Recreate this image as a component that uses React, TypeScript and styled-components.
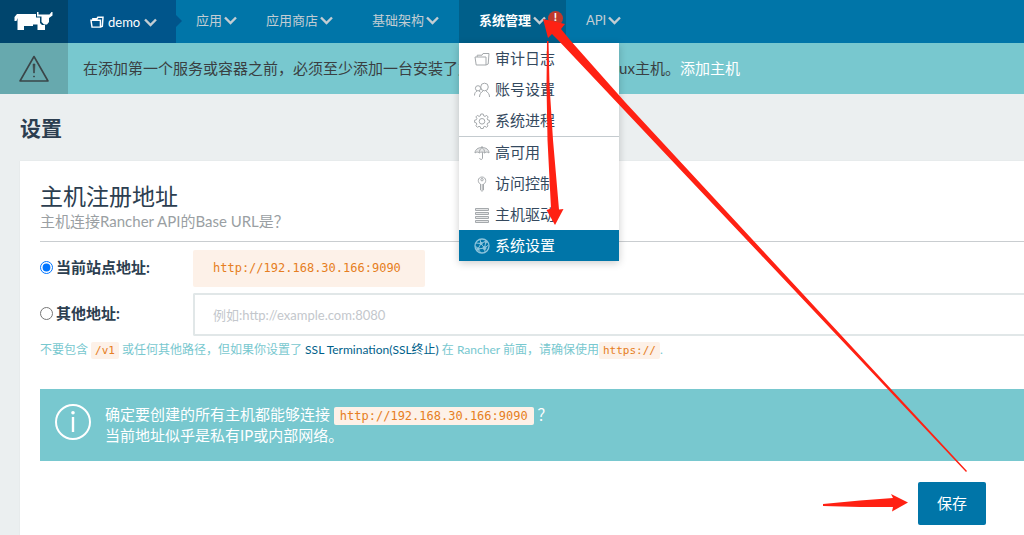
import React from "react";
import styled, { createGlobalStyle } from "styled-components";

const GlobalStyle = createGlobalStyle`
  * { box-sizing: border-box; }
  body {
    margin: 0;
    background: #ebeff0;
    color: #2c3e50;
    font: 15px/21px Lato, "Noto Sans CJK SC", sans-serif;
    overflow-x: hidden;
  }
  a { text-decoration: none; }
  button, input { font: inherit; }
`;

const Page = styled.div`
  position: relative;
`;

const Header = styled.header`
  display: flex;
  height: 43px;
  background: #0075a8;
`;

const Logo = styled.a`
  width: 68px;
  padding: 9px 0 0 13px;
  background: #00456d;
`;

const Environment = styled.button`
  position: relative;
  display: flex;
  align-items: center;
  gap: 4px;
  width: 108px;
  padding: 1px 0 0 22px;
  border: 0;
  background: #00558b;
  color: #fff;
  font-size: 13px;
  svg:last-child { color: #c3cdd3; }
  &::after {
    content: "";
    position: absolute;
    left: 100%;
    top: 15px;
    border: 6px solid transparent;
    border-right: 0;
    border-left-color: #00558b;
  }
`;

const Nav = styled.nav`
  display: flex;
`;

const NavItem = styled.div<{ $width: number; $active?: boolean }>`
  position: relative;
  display: flex;
  width: ${(p) => p.$width}px;
  background: ${(p) => (p.$active ? "#005f8a" : "transparent")};
`;

const NavButton = styled.button<{ $active?: boolean }>`
  display: flex;
  align-items: center;
  gap: 2px;
  width: 100%;
  padding: 0 0 2px 20px;
  border: 0;
  background: none;
  white-space: nowrap;
  font-size: 13px;
  font-weight: ${(p) => (p.$active ? 700 : 400)};
  color: ${(p) => (p.$active ? "#fff" : "#c3cdd3")};
  svg { color: #c3cdd3; }
`;

const AlertBadge = styled.span`
  position: absolute;
  top: 11px;
  left: 89px;
  width: 15px;
  height: 15px;
  border-radius: 50%;
  background: #c0392b;
  color: #fff;
  font-size: 12px;
  font-weight: 700;
  line-height: 12px;
  text-align: center;
`;

const Menu = styled.ul`
  position: absolute;
  z-index: 2;
  top: 43px;
  left: 0;
  width: 160px;
  margin: 0;
  padding: 0;
  list-style: none;
  background: #fff;
  box-shadow: 0 2px 8px rgba(0, 0, 0, 0.2);
`;

const MenuItem = styled.li<{ $divided?: boolean }>`
  border-top: ${(p) => (p.$divided ? "1px solid #c4cbcf" : "0")};
`;

const MenuLink = styled.a<{ $active?: boolean }>`
  display: flex;
  align-items: center;
  gap: 5px;
  height: 31px;
  padding-left: 15px;
  color: ${(p) => (p.$active ? "#fff" : "#34495e")};
  background: ${(p) => (p.$active ? "#0075a8" : "transparent")};
  svg { color: ${(p) => (p.$active ? "#8dc4dc" : "#a5a9ac")}; }
`;

const Banner = styled.div`
  display: flex;
  height: 51px;
  background: #78c8cf;
  color: #3a3f42;
  white-space: nowrap;
`;

const BannerIcon = styled.div`
  display: flex;
  align-items: center;
  justify-content: center;
  width: 68px;
  background: #67a9ae;
`;

const BannerText = styled.p`
  margin: 0;
  padding: 15px;
  a { color: #fff; }
`;

const PageTitle = styled.h1`
  margin: 0;
  padding: 19px 20px 18px;
  font-size: 21px;
  line-height: 30px;
`;

const Card = styled.main`
  margin-left: 20px;
  padding: 20px 0 10px 20px;
  background: #fff;
  box-shadow: 0 0 1px rgba(0, 0, 0, 0.1);
`;

const SectionHeader = styled.header`
  padding-bottom: 9px;
  border-bottom: 1px solid #c9cdd0;
`;

const SectionTitle = styled.h2`
  margin: 0;
  font-size: 23px;
  font-weight: 400;
  line-height: 30px;
`;

const Subtitle = styled.p`
  margin: 0;
  color: #9a9fa3;
`;

const Fields = styled.div`
  display: grid;
  gap: 6px;
  padding-top: 8px;
`;

const Field = styled.div`
  display: grid;
  grid-template-columns: 153px 1fr;
  align-items: center;
`;

const Choice = styled.label`
  display: flex;
  align-items: center;
  gap: 3px;
  padding-bottom: 2px;
  font-weight: 700;
  input { width: 13px; height: 13px; margin: 0; }
`;

const Code = styled.code`
  padding: 2px 4px;
  border-radius: 2px;
  background: #fdf1e8;
  color: #e67e22;
  font: 11px/15px "DejaVu Sans Mono", monospace;
`;

const AddressCode = styled(Code)`
  padding: 2px 6px;
  font-size: 12px;
`;

const CurrentAddress = styled(Code)`
  justify-self: start;
  padding: 8px 24px 8px 20px;
  font-size: 12px;
  line-height: 21px;
`;

const UrlInput = styled.input`
  width: 100%;
  height: 43px;
  padding: 0 18px;
  border: 2px solid #e1e7e8;
  border-right: 0;
  border-radius: 2px 0 0 2px;
  background: #fff;
  font-size: 13px;
  &::placeholder { color: #c3c7cc; opacity: 1; }
`;

const Help = styled.p`
  margin: 0;
  padding-top: 3px;
  color: #78c8cf;
  font-size: 12px;
  a { color: #005f8a; }
`;

const Notice = styled.section`
  display: flex;
  gap: 14px;
  margin-top: 29px;
  padding: 15px;
  background: #78c8cf;
  color: #fff;
  p { margin: 0; }
`;

const Actions = styled.div`
  display: flex;
  justify-content: flex-end;
  padding: 21px 38px 0 0;
`;

const SaveButton = styled.button`
  width: 68px;
  height: 43px;
  border: 0;
  border-radius: 2px;
  background: #0075a8;
  color: #fff;
`;

const Annotations = styled.svg`
  position: absolute;
  z-index: 3;
  top: 0;
  left: 0;
  pointer-events: none;
`;

const Chevron = () => (
  <svg width="13" height="9" viewBox="0 0 13 9" fill="none" stroke="currentColor" strokeWidth="2.4">
    <path d="M1 1.5 6.5 7 12 1.5" />
  </svg>
);

const Folder = ({ bold }: { bold?: boolean }) => (
  <svg width={bold ? 14 : 16} height={bold ? 12 : 14} viewBox="0 0 16 14" fill="none" stroke="currentColor" strokeWidth={bold ? 1.7 : 1}>
    <path d="M1 5H12V13H2.2ZM3.2 5V3.2H8L9 1.5H15L14.2 12 12 13" />
  </svg>
);

const drawings: Record<string, React.ReactNode> = {
  users: (
    <>
      <circle cx="10.5" cy="5" r="3.8" />
      <path d="M5.5 15C5.5 12 7 10.5 9 9M12 9C14 10.5 15.5 12 15.5 15" />
      <circle cx="4" cy="6.3" r="2.6" />
      <path d="M.5 13.5C.5 11 1.5 9.8 3 9M5 9 6.6 10.2" />
    </>
  ),
  gear: (
    <>
      <path d="M6.8 1H9.2L9.7 2.9 11 3.4 12.7 2.4 14.2 4 13.2 5.6 13.7 6.9 15.4 7.3V9.5L13.7 10 13.1 11.2 14 12.9 12.5 14.3 10.9 13.3 9.7 13.8 9.2 15.5H6.8L6.3 13.8 5 13.3 3.4 14.3 1.9 12.8 2.8 11.1 2.3 9.9.6 9.4V7.2L2.3 6.8 2.9 5.5 1.9 3.9 3.4 2.4 5.1 3.4 6.3 2.9Z" />
      <circle cx="8" cy="8.3" r="2.8" />
    </>
  ),
  umbrella: (
    <>
      <path d="M1 8C1 4.7 4 2.5 8 2.5S15 4.7 15 8C13.5 6.7 12 6.7 10.8 8 9.5 6.7 6.5 6.7 5.2 8 4 6.7 2.5 6.7 1 8Z" fill="currentColor" fillOpacity=".25" />
      <path d="M8 1V2.5M5.2 8C5.3 5.5 6.5 3.5 8 2.5 9.5 3.5 10.7 5.5 10.8 8M8.5 7.2V13C8.5 15 5.7 15 5.7 13" />
    </>
  ),
  key: (
    <>
      <path d="M6.5 8C4.5 7.2 4.3 5.5 4.3 4.5 4.3 2.5 6 1 8 1S11.7 2.5 11.7 4.5C11.7 5.5 11.5 7.2 9.5 8V14L8 15.3 6.5 14Z" />
      <circle cx="8" cy="3.7" r="1.2" />
      <path d="M8.2 8V14" />
    </>
  ),
  hosts: (
    <path d="M1.5 1.5H14.5V3.5H1.5ZM1.5 5.5H14.5V7.5H1.5ZM1.5 9.5H14.5V11.5H1.5ZM1.5 13.5H14.5V15.5H1.5Z" fill="currentColor" fillOpacity=".3" />
  ),
  network: (
    <>
      <circle cx="8" cy="8" r="7" strokeWidth="1.3" />
      <path d="M2 5 7 5.5 12 3M7 5.5 10.5 10 14.5 7M7 5.5 4 11 10.5 10 11 14M4 11 1.5 8M4 11 7 15M7 5.5 6 1.5M10.5 10 12 3" />
      <circle cx="7" cy="5.5" r="1.2" fill="currentColor" />
      <circle cx="4" cy="11" r="1.2" fill="currentColor" />
      <circle cx="10.5" cy="10" r="1.5" fill="currentColor" />
      <circle cx="12" cy="4" r="1" fill="currentColor" />
    </>
  ),
};

const MenuIcon = ({ name }: { name: string }) =>
  name === "folder" ? (
    <Folder />
  ) : (
    <svg width="16" height="16" viewBox="0 0 16 16" fill="none" stroke="currentColor">
      {drawings[name]}
    </svg>
  );

const menu = [
  { icon: "folder", label: "审计日志" },
  { icon: "users", label: "账号设置" },
  { icon: "gear", label: "系统进程" },
  { icon: "umbrella", label: "高可用", divided: true },
  { icon: "key", label: "访问控制" },
  { icon: "hosts", label: "主机驱动" },
  { icon: "network", label: "系统设置", active: true },
];

export default function App() {
  return (
    <Page>
      <GlobalStyle />
      <Header>
        <Logo href="#" aria-label="Rancher">
          <svg width="42" height="24" viewBox="0 0 42 24" fill="#fff">
            <path d="M4 5H23V8.5H27V14L29 16H32V21H24.5V15.5H20V17H11V21H4.5V9L3.5 12H1.5V8Z" />
            <path d="M24 3H25.5V5.5H36.5L38.5 3H39.5V6.5L36 9V13L34 15.5H31L28.5 13V7.5H24Z" />
          </svg>
        </Logo>
        <Environment>
          <Folder bold />
          <span>demo</span>
          <Chevron />
        </Environment>
        <Nav>
          <NavItem $width={70}><NavButton>应用<Chevron /></NavButton></NavItem>
          <NavItem $width={106}><NavButton>应用商店<Chevron /></NavButton></NavItem>
          <NavItem $width={107}><NavButton>基础架构<Chevron /></NavButton></NavItem>
          <NavItem $width={107} $active>
            <NavButton $active>系统管理<Chevron /></NavButton>
            <AlertBadge>!</AlertBadge>
            <Menu>
              {menu.map((item) => (
                <MenuItem key={item.label} $divided={item.divided}>
                  <MenuLink href="#" $active={item.active}>
                    <MenuIcon name={item.icon} />
                    {item.label}
                  </MenuLink>
                </MenuItem>
              ))}
            </Menu>
          </NavItem>
          <NavItem $width={75}><NavButton>API<Chevron /></NavButton></NavItem>
        </Nav>
      </Header>
      <Banner>
        <BannerIcon>
          <svg width="32" height="28" viewBox="0 0 32 28" fill="none" stroke="#3a4548" strokeWidth="1.6" strokeLinejoin="round">
            <path d="M16 1.5 30 26H2Z" />
            <path d="M15 9H17L16.4 18H15.6ZM15.5 21H16.5V22H15.5Z" fill="#3a4548" strokeWidth=".6" />
          </svg>
        </BannerIcon>
        <BannerText>
          在添加第一个服务或容器之前，必须至少添加一台安装了支持的Docker版本的 Linux主机。<a href="#">添加主机</a>
        </BannerText>
      </Banner>
      <PageTitle>设置</PageTitle>
      <Card>
        <SectionHeader>
          <SectionTitle>主机注册地址</SectionTitle>
          <Subtitle>主机连接Rancher API的Base URL是？</Subtitle>
        </SectionHeader>
        <Fields>
          <Field>
            <Choice><input type="radio" name="host" defaultChecked />当前站点地址:</Choice>
            <CurrentAddress>http://192.168.30.166:9090</CurrentAddress>
          </Field>
          <Field>
            <Choice><input type="radio" name="host" />其他地址:</Choice>
            <UrlInput aria-label="其他地址" placeholder="例如:http://example.com:8080" />
          </Field>
        </Fields>
        <Help>
          不要包含 <Code>/v1</Code> 或任何其他路径，但如果你设置了 <a href="#">SSL Termination(SSL终止)</a> 在 Rancher 前面，请确保使用<Code>https://</Code>.
        </Help>
        <Notice>
          <svg width="36" height="36" viewBox="0 0 36 36" fill="none" stroke="#fff" strokeWidth="2">
            <circle cx="18" cy="18" r="17" />
            <path d="M18 13V28" strokeWidth="2.4" />
            <circle cx="18" cy="8.8" r="1.8" fill="#fff" stroke="none" />
          </svg>
          <div>
            <p>确定要创建的所有主机都能够连接 <AddressCode>http://192.168.30.166:9090</AddressCode> ？</p>
            <p>当前地址似乎是私有IP或内部网络。</p>
          </div>
        </Notice>
        <Actions><SaveButton>保存</SaveButton></Actions>
      </Card>
      <Annotations width="1024" height="535" viewBox="0 0 1024 535" fill="#ff2113" aria-hidden="true">
        <path d="M543 19 565 24 561 29 570 40 625 102 967 471 966 472 625 111 558 40 552 34 548 38Z" />
        <path d="M547 41H548.5L549.5 85 553 140 559 209.5 563.5 209 555 225 546.5 210 551 208.5 547.5 140 546.5 85Z" />
        <path d="M823 504 860 500.5 893 498 891 494 908 502.5 892 511.5 893 507 860 507 823 506Z" />
      </Annotations>
    </Page>
  );
}
